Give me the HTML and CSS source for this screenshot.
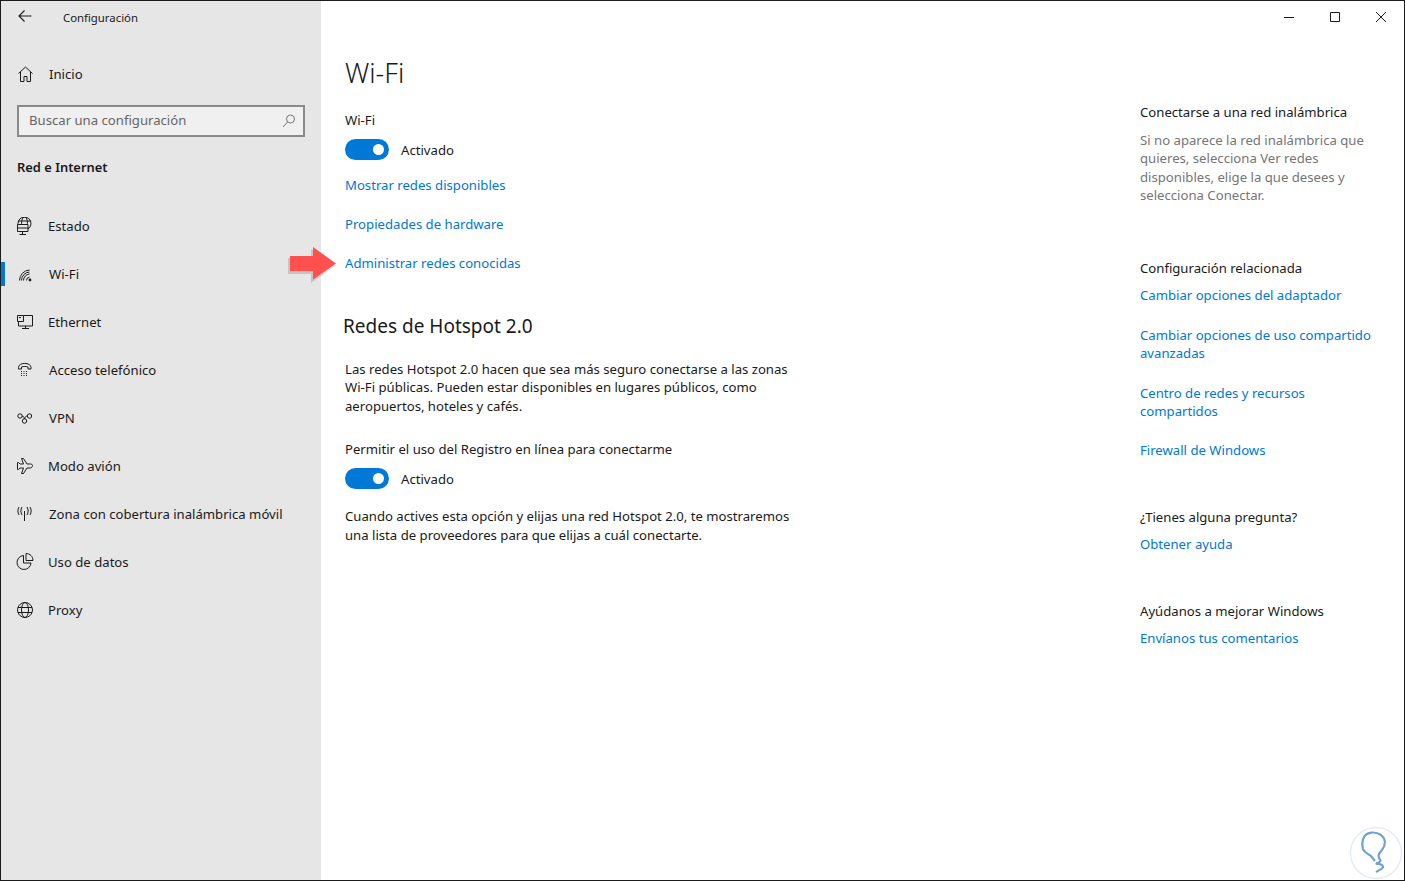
FILE: index.html
```html
<!DOCTYPE html>
<html lang="es">
<head>
<meta charset="utf-8">
<title>Configuración</title>
<link rel="stylesheet" href="styles.css">
</head>
<body>
<div class="window">
  <aside class="sidebar">
    <div class="titlebar">
      <svg class="back" width="16" height="16" viewBox="0 0 16 16"><path d="M14.500 8H2M7.500 2.500 2 8l5.500 5.500"/></svg>
      <span class="app-title">Configuración</span>
    </div>
    <div class="nav-row home wide">
      <svg class="ico" width="18" height="18" viewBox="0 0 18 18"><path d="M2.500 8.500 9.500 2l7 6.500M4.500 7v9.500h3.500v-5h3v5h3.500V7"/></svg>
      <span>Inicio</span>
    </div>
    <div class="search">
      <span class="search-text">Buscar una configuración</span>
      <svg class="ico" width="14" height="14" viewBox="0 0 14 14"><circle cx="8.500" cy="5" r="4"/><path d="M5.500 8 1 13"/></svg>
    </div>
    <div class="section">Red e Internet</div>
    <nav class="nav">
      <div class="nav-row">
        <svg class="ico" width="18" height="18" viewBox="0 0 18 18"><circle cx="8.500" cy="6.500" r="6.500"/><ellipse cx="8.500" cy="6.500" rx="3" ry="6.500"/><path d="M2 4h13"/><path class="cut" d="M1.500 7.500h10.500v7H1.500z"/><path d="M1.500 11h10.500M6.500 14.500V17M3.500 17.500h6.500"/></svg>
        <span>Estado</span>
      </div>
      <div class="nav-row current wide">
        <svg class="ico" width="18" height="18" viewBox="0 0 18 18"><circle class="fill" cx="14" cy="15" r="1.400"/><path d="M10.500 15.500a3.500 3.500 0 0 1 3-3.500M7.500 15.500a6.500 6.500 0 0 1 6-6.500M5.500 15.500a8.500 8.500 0 0 1 8-8.500M3.500 15.500a10.500 10.500 0 0 1 10-10.500"/></svg>
        <span>Wi-Fi</span>
      </div>
      <div class="nav-row">
        <svg class="ico" width="18" height="18" viewBox="0 0 18 18"><path d="M7.500 2.500h9v10.500h-14V8.500M9.500 13v2.500M6 15.500h7"/><path class="cut" d="M1.500 2.500h6v6h-6z"/><path d="M3 4.500h2"/></svg>
        <span>Ethernet</span>
      </div>
      <div class="nav-row wide">
        <svg class="ico" width="18" height="18" viewBox="0 0 18 18"><path d="M2.500 8V6.500c0-5.500 12.500-5.500 12.500 0V8h-3V6c-2-.7-4.500-.7-6.500 0v2z"/><path class="dots" d="M5 10.500h1M7.500 10.500h1M10 10.500h1M5 12.500h1M7.500 12.500h1M10 12.500h1M5 14.500h1M7.500 14.500h1M10 14.500h1"/></svg>
        <span>Acceso telefónico</span>
      </div>
      <div class="nav-row wide">
        <svg class="ico" width="18" height="18" viewBox="0 0 18 18"><circle cx="4" cy="7" r="2.200"/><circle cx="13.500" cy="7" r="2.200"/><circle cx="8.500" cy="12" r="2.200"/><path d="M6 7c2 0 2 2 2.500 3M11.500 7c-2 0-2.500 1-3 3"/></svg>
        <span>VPN</span>
      </div>
      <div class="nav-row">
        <svg class="ico" width="18" height="18" viewBox="0 0 18 18"><path d="M16.500 8.500c0-1-1-1.500-2-1.500h-3.500L7.500 1.500H5.500l2 5.500H4L2.500 5.500h-1v7h1L4 11h3.500l-2 5.500h2L11 11h3.500c1 0 2-1.500 2-2.500z"/></svg>
        <span>Modo avión</span>
      </div>
      <div class="nav-row wide">
        <svg class="ico" width="18" height="18" viewBox="0 0 18 18"><path d="M8.500 6v10M6 2C4.500 4.500 4.500 7.500 6 10M11 2c1.500 2.500 1.500 5.500 0 8M3 2C1.500 4.500 1.500 7.500 3 10M14 2c1.500 2.500 1.500 5.500 0 8"/></svg>
        <span>Zona con cobertura inalámbrica móvil</span>
      </div>
      <div class="nav-row">
        <svg class="ico" width="18" height="18" viewBox="0 0 18 18"><path d="M7.500 2.500a7 7 0 1 0 7.500 7.500H7.500z"/><path d="M10 .5v7h7c0-4-3-7-7-7z"/></svg>
        <span>Uso de datos</span>
      </div>
      <div class="nav-row">
        <svg class="ico" width="18" height="18" viewBox="0 0 18 18"><circle cx="9" cy="9" r="7.500"/><ellipse cx="9" cy="9" rx="3.500" ry="7.500"/><path d="M2 6.500h14M2 11.500h14"/></svg>
        <span>Proxy</span>
      </div>
    </nav>
  </aside>

  <div class="pane">
    <div class="controls">
      <svg class="ctl" width="10" height="10" viewBox="0 0 10 10"><path d="M0 5.500h10"/></svg>
      <svg class="ctl" width="10" height="10" viewBox="0 0 10 10"><path d="M.5.500h9v9h-9z"/></svg>
      <svg class="ctl" width="10" height="10" viewBox="0 0 10 10"><path d="M0 0l10 10M10 0 0 10"/></svg>
    </div>
    <div class="columns">
      <main class="content">
        <h1>Wi-Fi</h1>
        <div class="label first">Wi-Fi</div>
        <div class="switch-row"><span class="toggle"><span class="knob"></span></span><span class="state">Activado</span></div>
        <a class="link l1">Mostrar redes disponibles</a>
        <a class="link l2">Propiedades de hardware</a>
        <a class="link l2">Administrar redes conocidas</a>
        <h2>Redes de Hotspot 2.0</h2>
        <p class="para p1">Las redes Hotspot 2.0 hacen que sea más seguro conectarse a las zonas Wi-Fi públicas. Pueden estar disponibles en lugares públicos, como aeropuertos, hoteles y cafés.</p>
        <div class="label second">Permitir el uso del Registro en línea para conectarme</div>
        <div class="switch-row"><span class="toggle"><span class="knob"></span></span><span class="state">Activado</span></div>
        <p class="para p2">Cuando actives esta opción y elijas una red Hotspot 2.0, te mostraremos una lista de proveedores para que elijas a cuál conectarte.</p>
      </main>
      <aside class="related">
        <div class="rhead r1">Conectarse a una red inalámbrica</div>
        <p class="muted">Si no aparece la red inalámbrica que quieres, selecciona Ver redes disponibles, elige la que desees y selecciona Conectar.</p>
        <div class="rhead r2">Configuración relacionada</div>
        <a class="link rl first-l">Cambiar opciones del adaptador</a>
        <a class="link rl">Cambiar opciones de uso compartido avanzadas</a>
        <a class="link rl">Centro de redes y recursos compartidos</a>
        <a class="link rl">Firewall de Windows</a>
        <div class="rhead r3">¿Tienes alguna pregunta?</div>
        <a class="link rl first-l">Obtener ayuda</a>
        <div class="rhead r4">Ayúdanos a mejorar Windows</div>
        <a class="link rl first-l">Envíanos tus comentarios</a>
      </aside>
    </div>
  </div>

  <svg class="arrow" width="60" height="44" viewBox="0 0 60 44"><path class="arrow-shadow" d="M3 13h23V4l24 17-24 17v-9H3z"/><path class="arrow-body" d="M5 11h23V2l23 16.500-23 16v-8.500H5z"/></svg>
  <svg class="mark" width="54" height="54" viewBox="0 0 54 54"><circle class="mark-ring" cx="27" cy="27" r="25.500"/><path class="mark-q" d="M27 46c5-3 9-4 6-7-2-2-7 0-5-2 3-1 5-1 2-5-1-2 0-5 3-8 4-5 4-11-1-15-6-4-14-3-17 2-2 4-2 8-1 12 1 3 5 5 8 7l4 5"/></svg>
</div>
</body>
</html>
```
FILE: styles.css
```css
* { box-sizing: border-box; }
html, body { margin: 0; padding: 0; }
body { width: 1405px; height: 881px; overflow: hidden; background: #fff; color: #1a1a1a; font-family: "Noto Sans", "Open Sans", sans-serif; font-size: 13.15px; }

.window { position: relative; width: 1405px; height: 881px; border: 1px solid #1c1c1c; display: flex; }

.sidebar { width: 320px; flex: none; background: #e6e6e6; }
.titlebar { height: 32px; display: flex; align-items: center; padding-left: 16px; }
.back { fill: none; stroke: #1a1a1a; stroke-width: 1.100; margin-top: -2px; }
.app-title { margin-left: 30px; font-size: 11.350px; }
.ico { fill: none; stroke: #1a1a1a; stroke-width: 1; flex: none; }
.nav-row { height: 48px; display: flex; align-items: center; padding-left: 15px; gap: 14px; }
.nav-row.wide { gap: 15px; }
.nav-row.home { margin-top: 17px; }
.nav-row.current { position: relative; }
.nav-row.current::before { content: ""; position: absolute; left: 0; top: 12px; width: 4px; height: 24px; background: #0078d7; }
.cut { fill: #e6e6e6; }
.fill { fill: #1a1a1a; stroke: none; }

.search { margin: 7px 0 0 16px; width: 288px; height: 32px; border: 2px solid #8a8a8a; background: #f0f0f0; display: flex; align-items: center; justify-content: space-between; padding: 0 7px 0 10px; color: #666; }
.search-text { padding-bottom: 2px; }
.search .ico { stroke: #777; }
.section { margin: 18px 0 0 16px; height: 24px; line-height: 24px; font-weight: 600; font-size: 12.900px; }
.nav { margin-top: 23px; }

.pane { flex: 1; min-width: 0; display: flex; flex-direction: column; }
.controls { height: 32px; display: flex; justify-content: flex-end; padding: 11px 18px 0 0; gap: 36px; }
.ctl { fill: none; stroke: #1a1a1a; stroke-width: 1; }
.columns { display: flex; justify-content: space-between; padding-left: 24px; }
.content { width: 450px; }
h1 { margin: 21px 0 0; height: 38px; line-height: 38px; font-size: 27px; font-weight: 300; }
.label { height: 18px; line-height: 18px; }
.label.first { margin-top: 19px; }
.label.second { margin-top: 25px; }
.switch-row { display: flex; align-items: center; gap: 12px; height: 22px; margin-top: 9px; }
.state { padding-top: 2px; }
.toggle { width: 44px; height: 21px; border-radius: 11px; background: #0078d7; position: relative; display: block; }
.knob { position: absolute; right: 5px; top: 5px; width: 11px; height: 11px; border-radius: 50%; background: #fff; }
.link { display: block; color: #0078d7; line-height: 18.300px; }
.l1 { margin-top: 16px; }
.l2 { margin-top: 20.700px; }
h2 { margin: 39.600px 0 0 -2px; height: 28px; line-height: 28px; font-size: 19px; font-weight: 400; }
.para { margin: 0; line-height: 18.400px; }
.p1 { margin-top: 20.200px; }
.p2 { margin-top: 18px; width: 460px; }

.related { width: 246px; margin-right: 18px; padding-top: 69px; }
.rhead { line-height: 18px; height: 18px; }
.r1 { margin-top: 1px; }
.r2 { margin-top: 54px; }
.r3 { margin-top: 49px; }
.r4 { margin-top: 48px; }
.muted { margin: 10px 0 0; line-height: 18.400px; color: #767676; }
.rl { margin-top: 21px; }
.rl.first-l { margin-top: 9px; }
.first-l + .rl { margin-top: 22px; }

.arrow { position: absolute; left: 284px; top: 244px; }
.arrow-shadow { fill: #000; opacity: .14; }
.arrow-body { fill: #ff5050; }
.mark { position: absolute; left: 1348px; top: 825px; fill: none; }
.mark-ring { stroke: #e6ecf5; stroke-width: 1.500; fill: #fff; }
.mark-q { stroke: #6fa2d4; stroke-width: 2.200; }
```
